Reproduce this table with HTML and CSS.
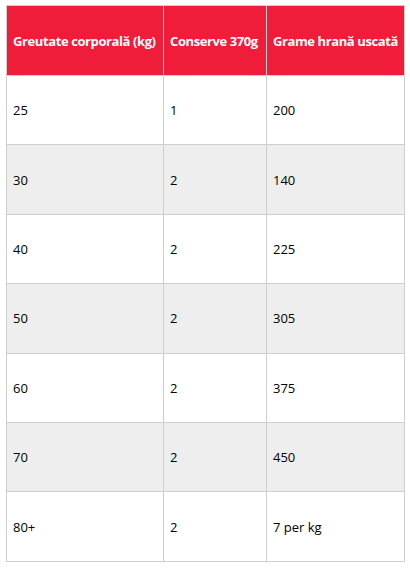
FILE: index.html
```html
<!DOCTYPE html>
<html lang="ro">
<head>
<meta charset="utf-8">
<link rel="stylesheet" href="styles.css">
</head>
<body>
<table class="feed">
  <colgroup>
    <col class="c1"><col class="c2"><col class="c3">
  </colgroup>
  <thead>
    <tr><th>Greutate corporală (kg)</th><th>Conserve 370g</th><th>Grame hrană uscată</th></tr>
  </thead>
  <tbody>
    <tr><td>25</td><td>1</td><td>200</td></tr>
    <tr><td>30</td><td>2</td><td>140</td></tr>
    <tr><td>40</td><td>2</td><td>225</td></tr>
    <tr><td>50</td><td>2</td><td>305</td></tr>
    <tr><td>60</td><td>2</td><td>375</td></tr>
    <tr><td>70</td><td>2</td><td>450</td></tr>
    <tr><td>80+</td><td>2</td><td>7 per kg</td></tr>
  </tbody>
</table>
</body>
</html>
```
FILE: styles.css
```css
html, body { margin: 0; padding: 0; background: #fff; }
body { padding: 5px 6px; }
.feed {
  border-collapse: collapse;
  table-layout: fixed;
  width: 398px;
  font-family: "Open Sans", "Liberation Sans", sans-serif;
  font-size: 13px;
  color: #000;
}
.c1 { width: 157px; }
.c2 { width: 103px; }
.c3 { width: 138px; }
.feed th, .feed td {
  border: 1px solid #cfcfcf;
  padding: 0 6px;
  text-align: left;
  vertical-align: middle;
  white-space: nowrap;
  overflow: hidden;
}
.feed th {
  background: #ef1c3a;
  color: #fff;
  font-weight: 700;
  font-size: 13px;
  letter-spacing: -0.4px;
  height: 69px;
}
.feed td { height: 68.4px; }
.feed tbody tr:nth-child(even) td { background: #eeeeee; }
```
